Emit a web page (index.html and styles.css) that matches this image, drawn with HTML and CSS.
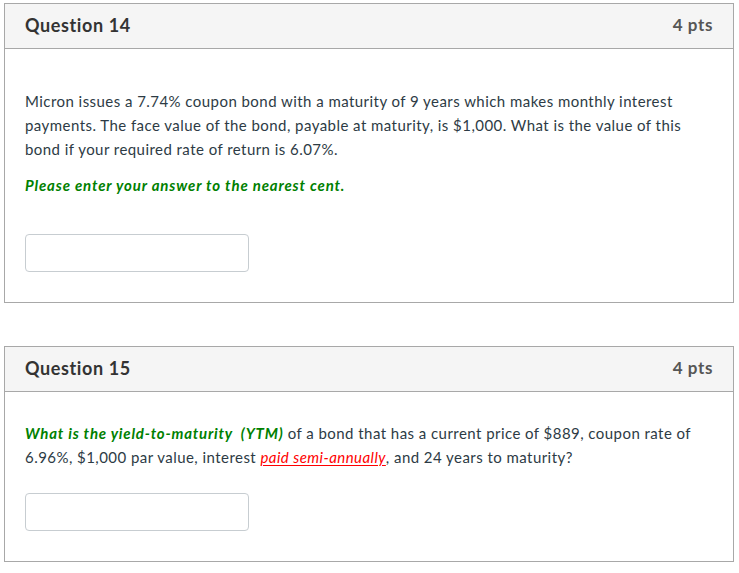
FILE: index.html
```html
<!DOCTYPE html>
<html>
<head>
<meta charset="utf-8">
<link rel="stylesheet" href="styles.css">
</head>
<body>
<div class="page">
  <div class="question">
    <div class="q-header">
      <span class="q-title">Question 14</span>
      <span class="q-points">4 pts</span>
    </div>
    <div class="q-body q-body-first">
      <p class="q-text">Micron issues a 7.74% coupon bond with a maturity of 9 years which makes monthly interest payments. The face value of the bond, payable at maturity, is $1,000. What is the value of this bond if your required rate of return is 6.07%.</p>
      <p class="q-note">Please enter your answer to the nearest cent.</p>
      <input class="answer answer-first" type="text">
    </div>
  </div>
  <div class="question">
    <div class="q-header">
      <span class="q-title">Question 15</span>
      <span class="q-points">4 pts</span>
    </div>
    <div class="q-body">
      <p class="q-text"><span class="green">What is the yield-to-maturity &nbsp;(YTM)</span> of a bond that has a current price of $889, coupon rate of 6.96%, $1,000 par value, interest <span class="red">paid semi-annually</span>, and 24 years to maturity?</p>
      <input class="answer" type="text">
    </div>
  </div>
</div>
</body>
</html>
```
FILE: styles.css
```css
html, body {
  margin: 0;
  padding: 0;
  background: #fff;
}
body {
  font-family: Lato, "Liberation Sans", sans-serif;
  color: #2d3b45;
}
.page {
  padding: 3px 5px 0 4px;
  display: flex;
  flex-direction: column;
  gap: 43px;
}
.question {
  border: 1px solid #a8a8a8;
  background: #fff;
}
.q-header {
  background: #f5f5f5;
  border-bottom: 1px solid #a8a8a8;
  height: 44px;
  box-sizing: border-box;
  height: 45px;
  display: flex;
  align-items: center;
  justify-content: space-between;
  padding: 0 20px 3px 20px;
}
.q-title {
  font-size: 18px;
  font-weight: 700;
  letter-spacing: 0.6px;
  color: #333;
}
.q-points {
  font-size: 17px;
  font-weight: 700;
  letter-spacing: 0.6px;
  color: #565656;
}
.q-body {
  padding: 29px 20px 30px 20px;
}
.q-body-first {
  padding-top: 40px;
}
.q-text {
  margin: 0;
  font-size: 15px;
  line-height: 24px;
  letter-spacing: 0.45px;
  color: #2d3b45;
}
.q-note {
  margin: 12px 0 0 0;
  font-size: 15px;
  line-height: 24px;
  letter-spacing: 0.85px;
  font-weight: 700;
  font-style: italic;
  color: #008000;
}
.green {
  font-weight: 700;
  font-style: italic;
  letter-spacing: 0.8px;
  color: #008000;
}
.red {
  font-style: italic;
  color: #ff0000;
  text-decoration: underline;
  text-underline-offset: 2px;
}
.answer {
  display: block;
  margin-top: 24px;
  width: 224px;
  height: 38px;
  box-sizing: border-box;
  border: 1px solid #c7cdd1;
  border-radius: 4px;
  background: #fff;
}
.answer-first {
  margin-top: 37px;
}
```
